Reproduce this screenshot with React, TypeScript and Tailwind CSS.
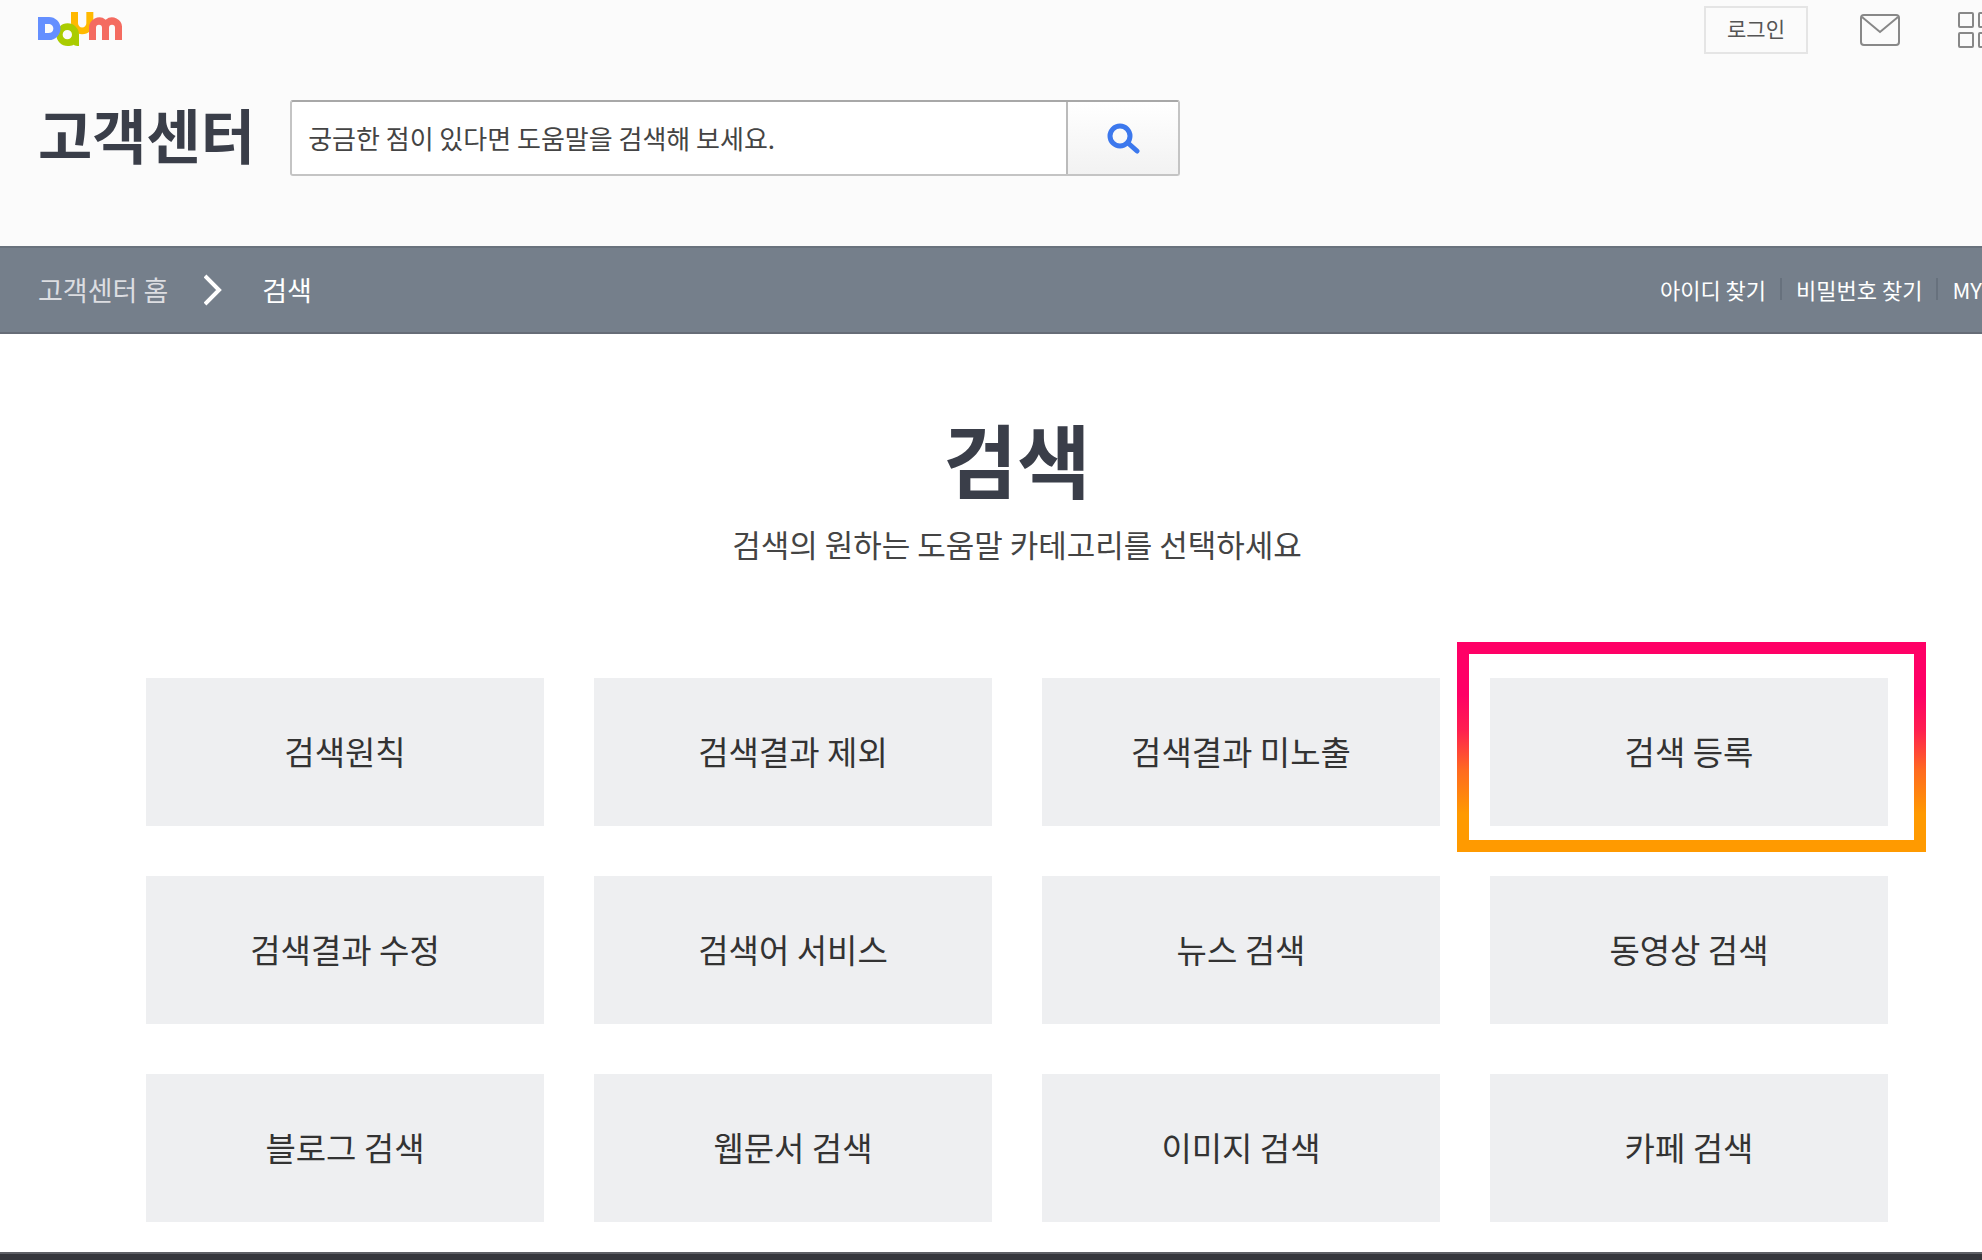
import clsx from "clsx";

type Category = { label: string; highlighted?: boolean };

const categories: Category[] = [
  { label: "검색원칙" },
  { label: "검색결과 제외" },
  { label: "검색결과 미노출" },
  { label: "검색 등록", highlighted: true },
  { label: "검색결과 수정" },
  { label: "검색어 서비스" },
  { label: "뉴스 검색" },
  { label: "동영상 검색" },
  { label: "블로그 검색" },
  { label: "웹문서 검색" },
  { label: "이미지 검색" },
  { label: "카페 검색" },
];

const quickLinks = ["아이디 찾기", "비밀번호 찾기", "MY"];

function DaumLogo() {
  return (
    <svg viewBox="0 0 252 102" className="h-[34px] w-[84px]" aria-hidden="true">
      {/* u */}
      <path
        d="M99 0h21v34a12.500 12.500 0 0 0 25 0V0h21v33a33 33 0 0 1-67 0z"
        fill="#ffb900"
      />
      {/* a */}
      <path
        fillRule="evenodd"
        d="M89 34a34 34 0 0 1 34 33v35c-7 0-11-1-16-4-6 3-12 4-18 4a34 34 0 0 1 0-68zm-1 20a14 14 0 1 0 0 28 14 14 0 0 0 0-28z"
        fill="#aacc00"
      />
      {/* D */}
      <path
        fillRule="evenodd"
        d="M0 15h33a34 34 0 0 1 0 69H0zm21 21v27h10c9 0 15-5 15-13s-6-14-15-14z"
        fill="#648fff"
      />
      {/* m */}
      <path
        d="M153 84V48a31 31 0 0 1 50-25 30 30 0 0 1 49 25v36h-21V47a9 9 0 0 0-18 0v37h-21V47a9 9 0 0 0-18 0v37z"
        fill="#f46b60"
      />
    </svg>
  );
}

function MailIcon() {
  return (
    <svg
      viewBox="0 0 40 32"
      className="h-8 w-10"
      fill="none"
      stroke="#888"
      strokeWidth="2"
      aria-hidden="true"
    >
      <rect x="1" y="1" width="38" height="30" rx="3" />
      <path d="M2 3l18 15L38 3" />
    </svg>
  );
}

function AppsIcon() {
  return (
    <svg
      viewBox="0 0 36 36"
      className="size-9"
      fill="none"
      stroke="#888"
      strokeWidth="2"
      aria-hidden="true"
    >
      <rect x="1" y="1" width="14" height="14" rx="1" />
      <rect x="21" y="1" width="14" height="14" rx="1" />
      <rect x="1" y="21" width="14" height="14" rx="1" />
      <rect x="21" y="21" width="14" height="14" rx="1" />
    </svg>
  );
}

function SearchIcon() {
  return (
    <svg
      viewBox="0 0 34 32"
      className="h-8 w-[34px]"
      fill="none"
      stroke="#3c78ed"
      strokeWidth="5"
      strokeLinecap="round"
      aria-hidden="true"
    >
      <circle cx="14" cy="14" r="10" />
      <path d="M22 21l9 8" />
    </svg>
  );
}

function Header() {
  return (
    <header className="h-[246px] bg-[#fbfbfb] pl-[38px]">
      <div className="flex h-[60px] items-center justify-between">
        <a href="#daum" aria-label="Daum" className="pb-0.5">
          <DaumLogo />
        </a>
        <div className="-mr-3 flex shrink-0 items-center">
          <button className="h-12 w-[104px] border-2 border-[#e5e5e5] pb-1 text-[21px] leading-[40px] text-[#555]">
            로그인
          </button>
          <a href="#mail" aria-label="메일" className="ml-[52px]">
            <MailIcon />
          </a>
          <button aria-label="서비스 더보기" className="ml-[58px]">
            <AppsIcon />
          </button>
        </div>
      </div>

      <div className="flex items-center gap-[35px] pt-10">
        <h1 className="shrink-0 pb-2 text-[59px] leading-[68px] font-bold text-[#3a3e49]">
          고객센터
        </h1>
        <form
          className="flex h-[76px] w-[890px] rounded-[3px] border-2 border-[#c4c4c4] border-t-[#a8a8a8] bg-white"
          onSubmit={(e) => e.preventDefault()}
        >
          <input
            type="text"
            aria-label="도움말 검색"
            defaultValue="궁금한 점이 있다면 도움말을 검색해 보세요."
            className="min-w-0 flex-1 px-4 pb-0.5 text-[26px] text-[#444] outline-none"
          />
          <button
            aria-label="검색"
            className="flex w-[112px] items-center justify-center border-l-2 border-[#bbb] bg-linear-to-b from-white to-[#f2f2f2]"
          >
            <SearchIcon />
          </button>
        </form>
      </div>
    </header>
  );
}

function NavBar() {
  return (
    <nav className="flex h-[88px] items-center justify-between border-t-2 border-b-2 border-t-[#69727d] border-b-[#666c77] bg-[#757f8b] pl-[38px] whitespace-nowrap text-white">
      <div className="flex items-center text-[27px]">
        <a href="#home" className="text-[#dcdde1]">
          고객센터 홈
        </a>
        <svg
          viewBox="0 0 18 32"
          className="mr-10 ml-9 h-8 w-[18px]"
          fill="none"
          stroke="#fff"
          strokeWidth="4"
          aria-hidden="true"
        >
          <path d="M1 2l14 14L1 30" />
        </svg>
        <a href="#search">검색</a>
      </div>
      <ul className="flex shrink-0 items-center pb-0.5 text-[22px]">
        {quickLinks.map((link, i) => (
          <li key={link} className="flex items-center">
            {i > 0 && <span className="mx-[14px] h-[22px] w-0.5 bg-[#67717d]" />}
            <a href="#link">{link}</a>
          </li>
        ))}
      </ul>
    </nav>
  );
}

function CategoryCard({ label, highlighted }: Category) {
  return (
    <li className="relative">
      <a
        href="#category"
        className="flex h-[148px] items-center justify-center bg-[#eeeff1] pb-px text-[33px] text-[#333]"
      >
        {label}
      </a>
      {/* Gradient frame around the category to pick */}
      {highlighted && (
        <span
          className={clsx(
            "pointer-events-none absolute -top-9 -right-[38px] -bottom-[26px] -left-[33px] border-[12px]",
            "[border-image:linear-gradient(#ff0066_25%,#ff1f50_42%,#ff6a20_61%,#ff9a00_82%)_12]"
          )}
        />
      )}
    </li>
  );
}

export default function App() {
  return (
    <div className="min-h-screen overflow-hidden bg-white font-['Noto_Sans_CJK_KR',sans-serif]">
      <Header />
      <NavBar />
      <main className="pr-[94px] pb-[30px] pl-[146px]">
        <div className="pt-[73px] text-center">
          <h2 className="text-[80px] leading-[100px] font-bold text-[#3a3e49]">
            검색
          </h2>
          <p className="pt-[14px] text-[31px] leading-[46px] text-[#444]">
            검색의 원하는 도움말 카테고리를 선택하세요
          </p>
        </div>
        <ul className="mt-[111px] grid grid-cols-4 gap-[50px]">
          {categories.map((c) => (
            <CategoryCard key={c.label} {...c} />
          ))}
        </ul>
      </main>
      <footer className="h-2 border-t-2 border-[#5f6066] bg-[#35363c]" />
    </div>
  );
}
